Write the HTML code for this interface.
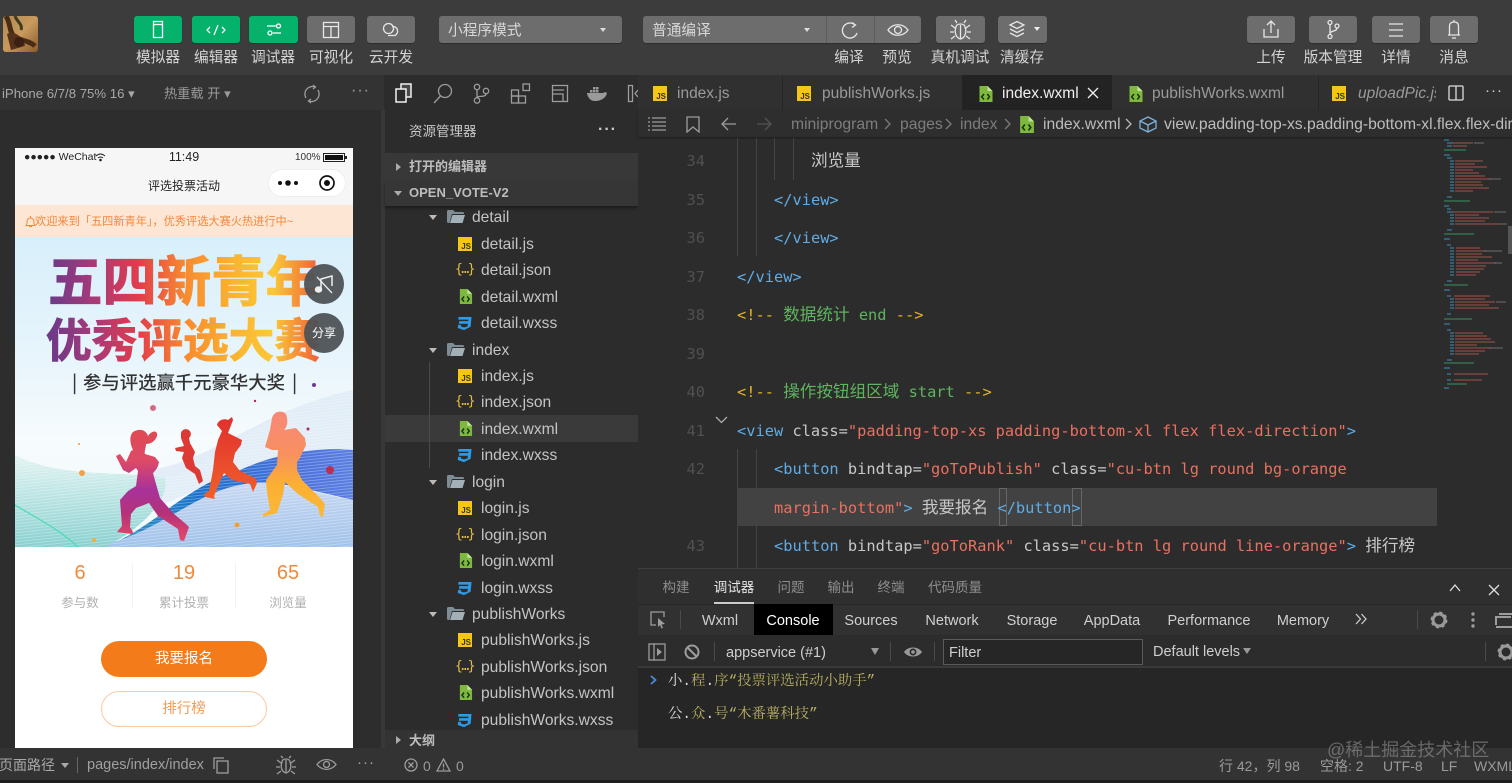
<!DOCTYPE html>
<html lang="zh"><head><meta charset="utf-8"><title>微信开发者工具</title>
<style>
*{box-sizing:border-box}
html,body{margin:0;padding:0;width:1512px;height:783px;overflow:hidden;background:#2d2d2d}
body{position:relative;font-family:"Liberation Sans","Noto Sans CJK SC",sans-serif;color:#ccc;font-size:15px}
.a{position:absolute}
.t{position:absolute;white-space:nowrap;line-height:20px}
.c{transform:translateX(-50%)}
.b{position:absolute;top:16px;height:27px;border-radius:3px;background:#6d6d6d;box-shadow:0 1px 1px rgba(0,0,0,.25)}
.g{background:#05b26c}
.b svg{position:absolute;left:0;top:0;fill:none;stroke:#e6e6e6;stroke-width:1.3}
.g svg{stroke:#fff}
.l{top:47px;margin-top:1px;color:#d4d4d4;font-size:14.7px}
.tab{top:84px;font-size:15.5px;color:#9a9a9a}
.ic{position:absolute;fill:none;stroke:#9d9d9d;stroke-width:1.3}
.code{position:absolute;margin-top:1px;white-space:pre;font-family:"DejaVu Sans Mono","Noto Sans CJK SC",monospace;font-size:15.35px;line-height:20px;color:#c8c8c8}
.cj{font-size:16.6px}
.n{position:absolute;margin-top:1px;left:680px;width:25px;text-align:right;font-family:"DejaVu Sans Mono",monospace;font-size:15.35px;line-height:20px;color:#505050}
.tg{color:#60ace6}.st{color:#ea7060}.cm{color:#5fb45f}.ye{color:#e6b422}
.gd{position:absolute;width:1px;background:#444}
.tr{position:absolute;margin-top:1px;white-space:nowrap;line-height:20px;font-size:15.6px;color:#c4c4c4}
.fi{position:absolute;width:15px;height:15px}
.js{position:absolute;left:458px;width:14px;height:14px;background:#f5c518;color:#333;font:bold 8px/8px "Liberation Sans",sans-serif;text-align:right;padding:6px 1px 0 0}
.js2{position:absolute;top:86px;width:14px;height:15px;background:#f5c518;color:#333;font:bold 8px/8px "Liberation Sans",sans-serif;text-align:right;padding:7px 1px 0 0}
.jn{position:absolute;left:455px;color:#e8c040;font:13px/20px "DejaVu Sans Mono",monospace;letter-spacing:-1.5px;white-space:nowrap}
.dv{top:611px;color:#cfcfcf;font-size:14.5px}
.bc{top:115px;font-size:15.7px;color:#7d7d7d}
.sr{top:756px;font-size:14px;color:#9a9a9a}
</style></head><body>

<svg width="0" height="0" style="position:absolute"><defs>
<symbol id="wx" viewBox="0 0 14 16"><path d="M1 0H9L14 5V16H1Z" fill="#7fb83e"/><path d="M9 0V5H14" fill="#c5e49c"/><path d="M5.500 8L3.200 10.800 5.500 13.500M8.800 8L11 10.800 8.800 13.500" fill="none" stroke="#16300c" stroke-width="1.500"/></symbol>
<symbol id="ss" viewBox="0 0 16 16"><path d="M1.500 1H15.500L14.500 11.500 7.500 15 .8 12.800 1.200 9.500H4.200L4 11 7.500 12.200 11.300 11 11.600 8.300H2L2.400 5.500H12L12.200 3.800H1.400Z" fill="#2f9be8"/></symbol>
<symbol id="fo" viewBox="0 0 18 15"><path d="M0 2.500Q0 1 1.500 1H6L8 3H15.500Q17 3 17 4.500V5H5L2.500 14H1.500Q0 14 0 12.500Z" fill="#7d8d96"/><path d="M5.500 6H18L15.500 14H3Z" fill="#a4b0b8"/></symbol>
</defs></svg>

<!-- top toolbar -->
<div class="a" style="left:0;top:0;width:1512px;height:75px;background:#3c3c3c"></div>
<svg class="a" style="left:3px;top:16px" width="35" height="36" viewBox="0 0 35 36">
<defs><linearGradient id="av" x1="0" y1="0" x2="1" y2="1"><stop offset="0" stop-color="#b08a52"/><stop offset=".5" stop-color="#c89a5e"/><stop offset="1" stop-color="#8b5a2b"/></linearGradient></defs>
<rect width="35" height="36" rx="3" fill="url(#av)"/>
<path d="M3 0C8 8 6 16 11 20C16 25 26 24 32 30" stroke="#4a2c16" stroke-width="5" fill="none"/>
<path d="M4 18C10 14 20 20 22 30L8 34Z" fill="#55301a"/><path d="M12 0C14 6 20 8 18 14" stroke="#3e3a22" stroke-width="3" fill="none"/><circle cx="16" cy="26" r="5" fill="#3a2012"/>
</svg>

<div class="b g" style="left:134px;width:48px"><svg width="48" height="27"><rect x="19.500" y="5.500" width="9" height="16"/><path d="M20 8.500H28"/></svg></div>
<div class="b g" style="left:192px;width:48px"><svg width="48" height="27"><path d="M18 11L15 14 18 17M30 11L33 14 30 17M26 9L22 19"/></svg></div>
<div class="b g" style="left:249px;width:49px"><svg width="49" height="27"><path d="M18 10H27M24 17H32"/><circle cx="29.500" cy="10" r="2"/><circle cx="21" cy="17" r="2"/></svg></div>
<div class="b" style="left:307px;width:48px"><svg width="48" height="27"><rect x="16.500" y="6.500" width="15" height="15"/><path d="M16.500 10.500H31.500M24 10.500V21.500"/></svg></div>
<div class="b" style="left:367px;width:48px"><svg width="48" height="27"><circle cx="21.500" cy="12.500" r="5"/><path d="M25 10.500A4.800 4.800 0 0 1 28 19.500H21"/></svg></div>
<div class="b" style="left:439px;width:183px"></div>
<div class="t" style="left:448px;top:21px;color:#d8d8d8;font-size:14.7px">小程序模式</div>
<div class="a" style="left:600px;top:28px;border:3.500px solid transparent;border-top:4px solid #ddd"></div>
<div class="b" style="left:643px;width:278px"></div>
<div class="a" style="left:826px;top:16px;width:1px;height:27px;background:#5c5c5c"></div>
<div class="a" style="left:874px;top:16px;width:1px;height:27px;background:#5c5c5c"></div>
<div class="t" style="left:652px;top:21px;color:#d8d8d8;font-size:14.7px">普通编译</div>
<div class="a" style="left:804px;top:28px;border:3.500px solid transparent;border-top:4px solid #ddd"></div>
<svg class="a" style="left:827px;top:16px;fill:none;stroke:#e6e6e6;stroke-width:1.300" width="47" height="27"><path d="M28 9A7.500 7.500 0 1 0 30 17M25 6.500L28.500 9 25 11.500"/></svg>
<svg class="a" style="left:875px;top:16px;fill:none;stroke:#e6e6e6;stroke-width:1.300" width="46" height="27"><path d="M13 14C18 7 28 7 33 14C28 21 18 21 13 14Z"/><circle cx="23" cy="14" r="3.500"/></svg>
<div class="b" style="left:936px;width:49px"><svg width="49" height="27"><path d="M20 11C20 7 29 7 29 11C31 16 29 22 24.500 23C20 22 18 16 20 11ZM24.500 9V23M21 7L19 4M28 7L30 4M19 12L15 9M30 12L34 9M18 16H14M31 16H35M19 20L15 23M30 20L34 23"/></svg></div>
<div class="b" style="left:998px;width:49px"><svg width="49" height="27"><path d="M19 9L26 5.500 33 9 26 12.500ZM19 13L26 16.500 33 13M19 17L26 20.500 33 17" transform="translate(-7 0)"/></svg><div class="a" style="left:36px;top:11px;border:3px solid transparent;border-top:4px solid #eee"></div></div>
<div class="b" style="left:1247px;width:48px"><svg width="48" height="27"><path d="M24 5V17M20 9L24 5 28 9M17 13V21H31V13"/></svg></div>
<div class="b" style="left:1309px;width:48px"><svg width="48" height="27"><circle cx="21" cy="6.500" r="2"/><circle cx="21" cy="20.500" r="2"/><circle cx="28" cy="10" r="2"/><path d="M21 8.500V18.500M28 12C28 16 21 14 21 18"/></svg></div>
<div class="b" style="left:1372px;width:48px"><svg width="48" height="27"><path d="M17 8H31M17 14H31M17 20H31"/></svg></div>
<div class="b" style="left:1430px;width:48px"><svg width="48" height="27"><path d="M24 4V6M19.500 19V10C19.500 7.500 21 6 24 6S28.500 7.500 28.500 10V19M18 19H30M22 22H26"/></svg></div>

<div class="t l c" style="left:158px">模拟器</div>
<div class="t l c" style="left:216px">编辑器</div>
<div class="t l c" style="left:273px">调试器</div>
<div class="t l c" style="left:331px">可视化</div>
<div class="t l c" style="left:391px">云开发</div>
<div class="t l c" style="left:849px">编译</div>
<div class="t l c" style="left:897px">预览</div>
<div class="t l c" style="left:960px">真机调试</div>
<div class="t l c" style="left:1022px">清缓存</div>
<div class="t l c" style="left:1271px">上传</div>
<div class="t l c" style="left:1333px">版本管理</div>
<div class="t l c" style="left:1396px">详情</div>
<div class="t l c" style="left:1454px">消息</div>

<!-- simulator -->
<div class="a" style="left:0;top:75px;width:384px;height:705px;background:#2d2d2d"></div>
<div class="a" style="left:0;top:75px;width:384px;height:35px;background:#333"></div>
<div class="a" style="left:381px;top:110px;width:4px;height:638px;background:#383838"></div>
<div class="t" style="left:2px;top:84px;font-size:13.2px;color:#a8a8a8">iPhone 6/7/8 75% 16 ▾</div>
<div class="t" style="left:164px;top:84px;font-size:13.2px;color:#9a9a9a">热重载 开 ▾</div>
<svg class="ic" style="left:302px;top:84px" width="20" height="20"><path d="M4 14A7.500 7.500 0 0 1 13 3M16 6A7.500 7.500 0 0 1 7 17"/><path d="M11 1L13.500 3 11 5M9 19L6.500 17 9 15"/></svg>
<div class="t" style="left:351px;top:81px;font-size:16px;color:#a0a0a0;letter-spacing:1px">···</div>

<!-- phone -->
<div class="a" style="left:15px;top:148px;width:338px;height:600px;background:#fff;overflow:hidden"></div>
<div class="a" style="left:15px;top:148px;width:338px;height:57px;background:#f6f6f6"></div>
<div class="t" style="left:24px;top:147px;font-size:10.5px;color:#222">●●●●● WeChat</div>
<svg class="a" style="left:95px;top:153px" width="11" height="9" fill="none" stroke="#222"><path d="M1 3Q5.500 -1 10 3M3 5Q5.500 3 8 5"/><circle cx="5.500" cy="7" r=".8" fill="#222"/></svg>
<div class="t c" style="left:184px;top:147px;font-size:12.5px;color:#222">11:49</div>
<div class="t" style="left:295px;top:148px;font-size:10px;color:#333">100%</div>
<div class="a" style="left:323px;top:153px;width:22px;height:9px;border:1px solid #222;padding:1px"><div style="width:100%;height:100%;background:#111"></div></div>
<div class="a" style="left:345px;top:156px;width:2px;height:3px;background:#222"></div>
<div class="t c" style="left:184px;top:176px;font-size:12px;color:#222">评选投票活动</div>
<div class="a" style="left:268px;top:169px;width:78px;height:28px;border-radius:14px;background:#fff;border:1px solid #eee"></div>
<svg class="a" style="left:268px;top:169px" width="78" height="28"><circle cx="12" cy="14" r="2" fill="#111"/><circle cx="20" cy="14" r="2.800" fill="#111"/><circle cx="28" cy="14" r="2" fill="#111"/><circle cx="59" cy="14" r="7" fill="none" stroke="#111" stroke-width="1.700"/><circle cx="59" cy="14" r="3" fill="#111"/></svg>
<div class="a" style="left:15px;top:205px;width:338px;height:32px;background:#fde6d3"></div>
<svg class="a" style="left:25px;top:215px" width="11" height="13" fill="none" stroke="#f58a3a"><path d="M5.500 1V2.500M2 9V6.500A3.500 3.500 0 0 1 9 6.500V9L10 10.500H1ZM4 11.500H7"/></svg>
<div class="t" style="left:35px;top:212px;font-size:11.2px;color:#f5873c">欢迎来到「五四新青年」，优秀评选大赛火热进行中~</div>

<!-- poster -->
<svg class="a" style="left:15px;top:237px" width="338" height="310" viewBox="15 237 338 310">
<defs>
<linearGradient id="pb" x1="0" y1="0" x2="0" y2="1"><stop offset="0" stop-color="#d8effb"/><stop offset=".4" stop-color="#e8f5fc"/><stop offset=".65" stop-color="#f6fbfd"/><stop offset="1" stop-color="#f2f9fb"/></linearGradient>
<linearGradient id="ti" gradientUnits="userSpaceOnUse" x1="48" y1="0" x2="322" y2="0"><stop offset="0" stop-color="#6a3a88"/><stop offset=".17" stop-color="#a83a78"/><stop offset=".33" stop-color="#e23c4a"/><stop offset=".5" stop-color="#f88a30"/><stop offset=".68" stop-color="#fbb430"/><stop offset=".82" stop-color="#fbc838"/><stop offset="1" stop-color="#ee5a38"/></linearGradient>
<pattern id="ln" width="3" height="3" patternUnits="userSpaceOnUse" patternTransform="rotate(-6)"><rect width="3" height="1" fill="#fff"/></pattern>
<linearGradient id="te" x1="0" y1="0" x2="0" y2="1"><stop offset="0" stop-color="#e2f4f2"/><stop offset="1" stop-color="#88d0d0"/></linearGradient>
<linearGradient id="lo" x1="0" y1="0" x2="0" y2="1"><stop offset="0" stop-color="#c8d8f2"/><stop offset="1" stop-color="#a0c2ea"/></linearGradient>
<linearGradient id="bl" gradientUnits="userSpaceOnUse" x1="120" y1="0" x2="353" y2="0"><stop offset="0" stop-color="#2a90c0"/><stop offset=".35" stop-color="#1a70cc"/><stop offset=".75" stop-color="#4a70dc"/><stop offset="1" stop-color="#5a7ee0"/></linearGradient>
<linearGradient id="r1" gradientUnits="userSpaceOnUse" x1="0" y1="427" x2="0" y2="542"><stop offset="0" stop-color="#e04a50"/><stop offset=".3" stop-color="#dc4a68"/><stop offset=".55" stop-color="#a8329a"/><stop offset=".75" stop-color="#b43278"/><stop offset="1" stop-color="#e84a68"/></linearGradient>
<linearGradient id="r3" gradientUnits="userSpaceOnUse" x1="0" y1="417" x2="0" y2="499"><stop offset="0" stop-color="#e0302e"/><stop offset="1" stop-color="#f0602a"/></linearGradient>
<linearGradient id="r4" gradientUnits="userSpaceOnUse" x1="0" y1="411" x2="0" y2="517"><stop offset="0" stop-color="#f88878"/><stop offset=".4" stop-color="#f89060"/><stop offset=".7" stop-color="#fbb032"/><stop offset="1" stop-color="#fbb838"/></linearGradient>
</defs>
<rect x="15" y="237" width="338" height="310" fill="url(#pb)"/>
<path d="M150 470C210 462 260 410 353 390V455C300 450 260 462 220 480L150 510Z" fill="#d6e4f4" opacity=".6"/>
<path d="M120 540C160 520 190 495 240 485C270 478 300 490 353 500V547H100Z" fill="url(#lo)"/>
<path d="M15 455C60 478 110 470 165 478C170 500 140 530 105 547H15Z" fill="url(#te)"/>
<path d="M120 540C160 520 190 485 240 470C280 452 320 447 353 450V500C300 488 270 478 240 485C200 492 170 522 120 540Z" fill="url(#bl)"/>
<path d="M15 455C60 478 110 470 165 478C210 470 260 410 353 390V547H15Z" fill="url(#ln)" opacity=".28"/>
<path d="M15 505C40 520 60 530 78 547" stroke="#48dcb0" stroke-width="1.200" fill="none"/>
<text x="48" y="301" textLength="272" lengthAdjust="spacingAndGlyphs" style="font-family:'Noto Sans CJK SC',sans-serif;font-weight:700;font-size:54px" fill="url(#ti)" stroke="url(#ti)" stroke-width="1.200">五四新青年</text>
<text x="46" y="357" textLength="274" lengthAdjust="spacingAndGlyphs" style="font-family:'Noto Sans CJK SC',sans-serif;font-weight:700;font-size:46px" fill="url(#ti)" stroke="url(#ti)" stroke-width="1">优秀评选大赛</text>
<text x="72" y="389" style="font-family:'Noto Sans CJK SC',sans-serif;font-size:18.400px;font-weight:500" fill="#333">|</text>
<text x="83" y="389" textLength="202" style="font-family:'Noto Sans CJK SC',sans-serif;font-size:18.400px;font-weight:500" fill="#333">参与评选赢千元豪华大奖</text>
<text x="292" y="389" style="font-family:'Noto Sans CJK SC',sans-serif;font-size:18.400px;font-weight:500" fill="#333">|</text>
<circle cx="314" cy="385" r="2" fill="#6a3a98"/>
<circle cx="153" cy="408" r="3" fill="#d86a80"/><circle cx="82" cy="473" r="3" fill="#f8a040"/><circle cx="330" cy="470" r="4" fill="#b83050"/><circle cx="237" cy="525" r="2.500" fill="#f0a030"/><circle cx="308" cy="429" r="1.500" fill="#a03060"/><circle cx="255" cy="401" r="1.200" fill="#a03060"/><circle cx="79" cy="444" r="1" fill="#f0a030"/><circle cx="94" cy="540" r="2" fill="#f0b040"/>
<path d="M133 432C140 428 146 430 148 436C152 430 158 430 157 436C155 442 150 444 146 444C146 448 144 452 145 454L155 457L159 462C158 468 155 471 153 473L156 484L160 498L174 514L186 524L189 527L184 541L180 540L178 529L158 516L149 503L136 508L131 514L130 527L133 532L132 534L117 532L122 526L120 500L128 491L136 486L138 471L136 468L129 473L123 470L116 456L120 454L126 462L131 451L133 450C130 444 129 436 133 432Z" fill="url(#r1)"/>
<path d="M181 433A5 5 0 1 1 189 438L190 443L195 452L193 458L195 466L200 470L203 481L199 484L195 474L186 468L182 458L184 452L176 451L175 448L184 446L181 438Z" fill="#dd3a36"/>
<path d="M217 425C218 420 224 418 228 420L232 417L233 420L230 428L228 433L234 436L242 440L241 445L235 453L233 462L240 471L255 478L257 483L253 492L250 484L232 480L224 473L219 484L214 496L215 499L205 497L204 494L209 491L213 470L215 452L218 440L222 431Z" fill="url(#r3)"/>
<path d="M272 418C274 411 282 410 286 414C288 420 288 426 284 430L296 428L305 438L306 445L300 458L297 462L297 470L302 480L320 498L325 504L323 517L320 516L318 507L298 494L285 482L283 495L277 513L263 517L263 514L270 510L267 492L266 480L277 465L278 450L272 450L265 447L270 430Z" fill="url(#r4)"/>
</svg>

<!-- floats -->
<div class="a" style="left:304px;top:264px;width:40px;height:40px;border-radius:50%;background:rgba(78,82,86,.95)"></div>
<svg class="a" style="left:304px;top:264px" width="40" height="40" fill="none" stroke="#eee" stroke-width="1.500"><path d="M17 25V15L28 12V22"/><ellipse cx="14.500" cy="25.500" rx="3" ry="2.500" fill="#eee"/><path d="M13 13L28 29" stroke-width="1.300"/></svg>
<div class="a" style="left:304px;top:313px;width:40px;height:40px;border-radius:50%;background:rgba(78,82,86,.95)"></div>
<div class="t c" style="left:324px;top:323px;font-size:12px;color:#fff">分享</div>

<!-- stats -->
<div class="t c" style="left:80px;top:563px;font-size:20px;color:#ef8a3a">6</div>
<div class="t c" style="left:184px;top:563px;font-size:20px;color:#ef8a3a">19</div>
<div class="t c" style="left:288px;top:563px;font-size:20px;color:#ef8a3a">65</div>
<div class="t c" style="left:80px;top:593px;font-size:12.500px;color:#b0b0b0">参与数</div>
<div class="t c" style="left:184px;top:593px;font-size:12.500px;color:#b0b0b0">累计投票</div>
<div class="t c" style="left:288px;top:593px;font-size:12.500px;color:#b0b0b0">浏览量</div>
<div class="a" style="left:132px;top:564px;width:1px;height:45px;background:#f3f3f3"></div>
<div class="a" style="left:235px;top:562px;width:1px;height:47px;background:#f3f3f3"></div>
<div class="a" style="left:101px;top:641px;width:166px;height:36px;border-radius:18px;background:#f37b1a"></div>
<div class="t c" style="left:184px;top:649px;font-size:14.500px;color:#fff">我要报名</div>
<div class="a" style="left:101px;top:691px;width:166px;height:36px;border-radius:18px;border:1px solid #f9c9a3;background:#fff"></div>
<div class="t c" style="left:184px;top:699px;font-size:14.500px;color:#f39a52">排行榜</div>

<!-- bottom left bar -->
<div class="a" style="left:0;top:748px;width:1512px;height:32px;background:#333"></div>
<div class="a" style="left:0;top:780px;width:1512px;height:3px;background:#1d1d1d"></div>
<div class="t" style="left:-1px;top:755px;font-size:14px;color:#a8a8a8">页面路径</div>
<div class="a" style="left:61px;top:763px;border:4px solid transparent;border-top:5px solid #aaa"></div>
<div class="a" style="left:77px;top:757px;width:1px;height:16px;background:#666"></div>
<div class="t" style="left:87px;top:755px;font-size:14.500px;color:#a0a0a0">pages/index/index</div>
<svg class="ic" style="left:213px;top:757px" width="16" height="17"><path d="M1 12V1H11"/><rect x="4" y="4" width="11" height="12"/></svg>
<svg class="ic" style="left:275px;top:755px" width="22" height="20"><path d="M7 7C7 3 15 3 15 7C17 12 15 17 11 18C7 17 5 12 7 7ZM11 5V18M8 3L6 1M14 3L16 1M6 8L2 5M16 8L20 5M5 12H1M17 12H21M6 16L2 19M16 16L20 19"/></svg>
<svg class="ic" style="left:316px;top:757px" width="21" height="15"><path d="M1 7.500C6 1 15 1 20 7.500C15 14 6 14 1 7.500Z"/><circle cx="10.500" cy="7.500" r="3"/></svg>
<div class="t" style="left:357px;top:753px;font-size:15px;color:#a0a0a0;letter-spacing:1px">···</div>

<!-- explorer -->
<div class="a" style="left:385px;top:75px;width:253px;height:673px;background:#2c2c2c"></div>
<svg class="a" style="left:394px;top:83px;fill:none;stroke:#f2f2f2;stroke-width:1.500" width="21" height="21"><rect x="7" y="1" width="10" height="13" fill="#4a4a4a" stroke="#f2f2f2"/><rect x="2" y="6" width="10" height="13" fill="#2c2c2c"/></svg>
<svg class="ic" style="left:433px;top:83px" width="21" height="21"><circle cx="12" cy="8" r="6.500"/><path d="M7.500 13L1 20"/></svg>
<svg class="ic" style="left:472px;top:83px" width="18" height="21"><circle cx="5" cy="4" r="2.700"/><circle cx="5" cy="17.500" r="2.700"/><circle cx="14" cy="8" r="2.700"/><path d="M5 6.700V14.800M14 10.700C14 15 5 12 5 15"/></svg>
<svg class="ic" style="left:510px;top:83px" width="21" height="21"><rect x="1.500" y="7" width="7" height="6"/><rect x="1.500" y="13" width="7" height="7"/><rect x="8.500" y="13" width="7" height="7"/><rect x="13" y="1" width="6.500" height="6.500"/></svg>
<svg class="ic" style="left:551px;top:84px" width="18" height="19"><rect x="1.500" y="1.500" width="15" height="16"/><path d="M1.500 6H13M1.500 10H12V17.500"/></svg>
<svg class="a" style="left:587px;top:85px" width="20" height="17" fill="#9a9a9a"><path d="M0 8H16C17 7 19 7 20 8C19 13 14 16 8 16C3 16 .5 12 0 8Z"/><rect x="3" y="5" width="2.500" height="2.500"/><rect x="6" y="5" width="2.500" height="2.500"/><rect x="9" y="5" width="2.500" height="2.500"/><rect x="6" y="2" width="2.500" height="2.500"/><rect x="9" y="2" width="2.500" height="2.500"/></svg>
<svg class="ic" style="left:627px;top:84px" width="11" height="19"><rect x="1.500" y="1.500" width="4" height="16"/><path d="M11 6L8 9.500 11 13"/></svg>
<div class="t" style="left:409px;top:122px;font-size:13.500px;color:#c8c8c8">资源管理器</div>
<div class="t" style="left:598px;top:120px;font-size:16px;color:#ccc;letter-spacing:1px;font-weight:bold">···</div>
<div class="a" style="left:385px;top:153px;width:253px;height:27px;background:#383838"></div>
<div class="a" style="left:385px;top:180px;width:253px;height:26px;background:#363636;box-shadow:0 2px 3px rgba(0,0,0,.4)"></div>
<div class="a" style="left:396px;top:163px;border:4px solid transparent;border-left:5px solid #aaa;border-right:0"></div>
<div class="t" style="left:409px;top:157px;font-size:13px;font-weight:bold;color:#bdbdbd">打开的编辑器</div>
<div class="a" style="left:394px;top:191px;border:4px solid transparent;border-top:5px solid #aaa"></div>
<div class="t" style="left:409px;top:183px;font-size:13px;font-weight:bold;color:#bdbdbd">OPEN_VOTE-V2</div>

<div class="a" style="left:385px;top:415px;width:253px;height:27px;background:#3a3a3a"></div>
<div class="a" style="left:429px;top:362px;width:1px;height:106px;background:#4a4a4a"></div>

<!-- tree rows -->
<div class="a" style="left:429px;top:215px;border:4px solid transparent;border-top:5px solid #bbb"></div>
<svg class="fi" style="left:447px;top:209px;width:18px"><use href="#fo"/></svg><div class="tr" style="left:472px;top:207px">detail</div>
<div class="js" style="top:237px">JS</div><div class="tr" style="left:481px;top:234px">detail.js</div>
<div class="jn" style="top:260px">{…}</div><div class="tr" style="left:481px;top:260px">detail.json</div>
<svg class="fi" style="left:458px;top:289px"><use href="#wx"/></svg><div class="tr" style="left:481px;top:287px">detail.wxml</div>
<svg class="fi" style="left:457px;top:316px"><use href="#ss"/></svg><div class="tr" style="left:481px;top:313px">detail.wxss</div>

<div class="a" style="left:429px;top:348px;border:4px solid transparent;border-top:5px solid #bbb"></div>
<svg class="fi" style="left:447px;top:342px;width:18px"><use href="#fo"/></svg><div class="tr" style="left:472px;top:340px">index</div>
<div class="js" style="top:369px">JS</div><div class="tr" style="left:481px;top:366px">index.js</div>
<div class="jn" style="top:392px">{…}</div><div class="tr" style="left:481px;top:392px">index.json</div>
<svg class="fi" style="left:458px;top:421px"><use href="#wx"/></svg><div class="tr" style="left:481px;top:419px">index.wxml</div>
<svg class="fi" style="left:457px;top:448px"><use href="#ss"/></svg><div class="tr" style="left:481px;top:445px">index.wxss</div>

<div class="a" style="left:429px;top:480px;border:4px solid transparent;border-top:5px solid #bbb"></div>
<svg class="fi" style="left:447px;top:474px;width:18px"><use href="#fo"/></svg><div class="tr" style="left:472px;top:472px">login</div>
<div class="js" style="top:501px">JS</div><div class="tr" style="left:481px;top:498px">login.js</div>
<div class="jn" style="top:525px">{…}</div><div class="tr" style="left:481px;top:525px">login.json</div>
<svg class="fi" style="left:458px;top:553px"><use href="#wx"/></svg><div class="tr" style="left:481px;top:551px">login.wxml</div>
<svg class="fi" style="left:457px;top:581px"><use href="#ss"/></svg><div class="tr" style="left:481px;top:578px">login.wxss</div>

<div class="a" style="left:429px;top:612px;border:4px solid transparent;border-top:5px solid #bbb"></div>
<svg class="fi" style="left:447px;top:606px;width:18px"><use href="#fo"/></svg><div class="tr" style="left:472px;top:604px">publishWorks</div>
<div class="js" style="top:633px">JS</div><div class="tr" style="left:481px;top:630px">publishWorks.js</div>
<div class="jn" style="top:657px">{…}</div><div class="tr" style="left:481px;top:657px">publishWorks.json</div>
<svg class="fi" style="left:458px;top:685px"><use href="#wx"/></svg><div class="tr" style="left:481px;top:683px">publishWorks.wxml</div>
<svg class="fi" style="left:457px;top:713px"><use href="#ss"/></svg><div class="tr" style="left:481px;top:710px">publishWorks.wxss</div>

<div class="a" style="left:385px;top:730px;width:253px;height:18px;background:#333"></div>
<div class="a" style="left:396px;top:736px;border:4px solid transparent;border-left:5px solid #aaa;border-right:0"></div>
<div class="t" style="left:409px;top:731px;font-size:13px;font-weight:bold;color:#bdbdbd">大纲</div>

<!-- editor -->
<div class="a" style="left:638px;top:75px;width:874px;height:493px;background:#2c2c2c"></div>
<div class="a" style="left:638px;top:75px;width:874px;height:35px;background:#303030"></div>
<div class="a" style="left:962px;top:75px;width:150px;height:35px;background:#232323"></div>
<div class="a" style="left:782px;top:75px;width:1px;height:35px;background:#262626"></div>
<div class="a" style="left:1318px;top:75px;width:1px;height:35px;background:#262626"></div>
<div class="js2" style="left:653px">JS</div><div class="t tab" style="left:677px">index.js</div>
<div class="js2" style="left:797px">JS</div><div class="t tab" style="left:822px">publishWorks.js</div>
<svg class="fi" style="left:978px;top:86px;height:16px"><use href="#wx"/></svg><div class="t tab" style="left:1002px;color:#efefef">index.wxml</div>
<svg class="a" style="left:1087px;top:87px" width="12" height="12" stroke="#f0f0f0" stroke-width="1.300"><path d="M1 1L11 11M11 1L1 11"/></svg>
<svg class="fi" style="left:1128px;top:86px;height:16px"><use href="#wx"/></svg><div class="t tab" style="left:1152px">publishWorks.wxml</div>
<div class="js2" style="left:1332px">JS</div>
<div class="a" style="left:1358px;top:75px;width:78px;height:35px;overflow:hidden"><div class="t tab" style="left:0;top:9px;font-style:italic">uploadPic.js</div></div>
<svg class="ic" style="left:1448px;top:85px;stroke:#ddd" width="16" height="16"><rect x="1" y="1" width="14" height="14" rx="1"/><path d="M8 1V15"/></svg>
<div class="t" style="left:1485px;top:81px;font-size:15px;color:#ccc;letter-spacing:1px">···</div>

<div class="a" style="left:638px;top:110px;width:874px;height:27px;background:#2e2e2e;box-shadow:0 1px 2px rgba(0,0,0,.35)"></div>
<svg class="ic" style="left:648px;top:116px" width="18" height="16"><path d="M4 2H18M4 6H18M4 10H18M4 14H18M0 2H2M0 6H2M0 10H2M0 14H2"/></svg>
<svg class="ic" style="left:686px;top:116px" width="14" height="17"><path d="M1 1H13V16L7 11 1 16Z"/></svg>
<svg class="ic" style="left:721px;top:117px" width="16" height="14"><path d="M15 7H1M7 1L1 7 7 13"/></svg>
<svg class="ic" style="left:756px;top:117px;stroke:#555" width="16" height="14"><path d="M1 7H15M9 1L15 7 9 13"/></svg>
<div class="t bc" style="left:791px">miniprogram</div>
<svg class="ic" style="left:884px;top:118px;stroke:#7d7d7d" width="8" height="12"><path d="M1 1L6 6 1 11"/></svg>
<div class="t bc" style="left:900px">pages</div>
<svg class="ic" style="left:945px;top:118px;stroke:#7d7d7d" width="8" height="12"><path d="M1 1L6 6 1 11"/></svg>
<div class="t bc" style="left:960px">index</div>
<svg class="ic" style="left:1004px;top:118px;stroke:#7d7d7d" width="8" height="12"><path d="M1 1L6 6 1 11"/></svg>
<svg class="fi" style="left:1019px;top:116px;height:17px"><use href="#wx"/></svg>
<div class="t bc" style="left:1043px;color:#bdbdbd">index.wxml</div>
<svg class="ic" style="left:1125px;top:118px;stroke:#bbb" width="8" height="12"><path d="M1 1L6 6 1 11"/></svg>
<svg class="ic" style="left:1139px;top:116px;stroke:#7fb2dc" width="18" height="17"><path d="M9 1L17 5V12L9 16 1 12V5ZM1 5L9 9 17 5M9 9V16"/></svg>
<div class="t bc" style="left:1164px;color:#bdbdbd;width:348px;overflow:hidden">view.padding-top-xs.padding-bottom-xl.flex.flex-direction</div>

<!-- indent guides -->
<div class="gd" style="left:737px;top:138px;height:118px"></div><div class="gd" style="left:756px;top:138px;height:118px"></div>
<div class="gd" style="left:774px;top:138px;height:42px"></div><div class="gd" style="left:793px;top:138px;height:42px"></div>
<div class="gd" style="left:737px;top:449px;height:119px"></div><div class="gd" style="left:756px;top:449px;height:119px"></div>

<div class="a" style="left:737px;top:488px;width:700px;height:38px;background:#424242"></div>
<div class="a" style="left:999px;top:488px;width:8px;height:38px;border:1px solid #666"></div>
<div class="a" style="left:1072px;top:488px;width:10px;height:38px;border:1px solid #666"></div>

<div class="n" style="top:150px">34</div><div class="code cj" style="left:811px;top:150px">浏览量</div>
<div class="n" style="top:189px">35</div><div class="code tg" style="left:774px;top:189px">&lt;/view&gt;</div>
<div class="n" style="top:227px">36</div><div class="code tg" style="left:774px;top:227px">&lt;/view&gt;</div>
<div class="n" style="top:266px">37</div><div class="code tg" style="left:737px;top:266px">&lt;/view&gt;</div>
<div class="n" style="top:304px">38</div><div class="code cm" style="left:737px;top:304px"><span class="ye">&lt;!--</span> <span class="cj">数据统计</span> end <span class="ye">--&gt;</span></div>
<div class="n" style="top:343px">39</div>
<div class="n" style="top:381px">40</div><div class="code cm" style="left:737px;top:381px"><span class="ye">&lt;!--</span> <span class="cj">操作按钮组区域</span> start <span class="ye">--&gt;</span></div>
<svg class="ic" style="left:715px;top:416px;stroke:#aaa" width="13" height="8"><path d="M1 1L6.500 6.500 12 1"/></svg>
<div class="n" style="top:420px">41</div><div class="code" style="left:737px;top:420px"><span class="tg">&lt;view</span> class=<span class="st">"padding-top-xs padding-bottom-xl flex flex-direction"</span><span class="tg">&gt;</span></div>
<div class="n" style="top:458px">42</div><div class="code" style="left:774px;top:458px"><span class="tg">&lt;button</span> bindtap=<span class="st">"goToPublish"</span> class=<span class="st">"cu-btn lg round bg-orange</span></div>
<div class="code" style="left:774px;top:497px"><span class="st">margin-bottom"</span><span class="tg">&gt;</span> <span class="cj">我要报名</span> <span class="tg">&lt;/button&gt;</span></div>
<div class="n" style="top:535px">43</div><div class="code" style="left:774px;top:535px"><span class="tg">&lt;button</span> bindtap=<span class="st">"goToRank"</span> class=<span class="st">"cu-btn lg round line-orange"</span><span class="tg">&gt;</span> <span class="cj">排行榜</span></div>

<!-- minimap -->
<svg class="a" style="left:1444px;top:138px" width="64" height="256" fill="none" stroke-width="1">
<path stroke="#3f8fb8" d="M0 2h5M3 5h6M3 8h5M0 17h6M3 20h5M6 23h4M6 26h4M6 29h4M6 32h4M6 35h4M6 38h4M6 41h4M6 44h4M6 47h4M6 50h4M6 53h4M3 59h5M0 68h5M3 71h4M3 74h6M6 77h4M6 80h4M6 83h4M6 86h4M3 92h5M0 101h6M3 107h4M6 110h4M6 113h4M6 116h4M6 119h4M6 122h4M6 125h4M6 128h4M6 131h4M6 134h4M6 137h4M3 143h5M0 152h6M3 158h4M6 161h4M6 164h4M6 167h4M6 170h4M3 176h4M0 186h6M3 192h4M6 195h4M6 198h4M6 201h4M6 204h4M6 207h4M6 210h4M6 213h4M6 216h4M3 222h5M0 230h6M3 236h4M3 242h4M0 250h5"/>
<path stroke="#b0584e" stroke-opacity=".9" d="M9 5h20M9 8h14M11 23h28M11 26h20M11 29h32M11 32h18M11 35h24M11 38h30M11 41h36M11 44h26M11 47h28M11 50h34M11 53h18M9 74h40M11 77h24M11 80h34M11 83h30M11 86h44M12 110h24M12 113h30M12 116h26M12 119h36M12 122h22M12 125h40M12 128h30M12 131h28M12 134h24M12 137h20M10 158h36M11 161h30M11 164h40M11 167h34M11 170h44M11 195h28M11 198h32M11 201h36M11 204h40M11 207h22M11 210h36M11 213h30M11 216h24M10 236h34M10 242h28"/>
<path stroke="#3aa86a" stroke-opacity=".85" d="M0 12h22M0 63h26M0 96h30M0 147h24M0 181h28M0 225h30M3 246h20"/>
<path stroke="#8a8a8a" stroke-opacity=".7" d="M30 5h10M45 41h12M50 74h12M40 113h18M50 125h8M55 86h8M52 164h10M45 210h14"/>
</svg>
<div class="a" style="left:1508px;top:226px;width:4px;height:28px;background:#555"></div>

<!-- devtools -->
<div class="a" style="left:638px;top:568px;width:874px;height:36px;background:#2f2f2f;border-top:1px solid #3e3e3e"></div>
<div class="t c" style="left:676px;top:578px;font-size:13.500px;color:#8e8e8e">构建</div>
<div class="t c" style="left:734px;top:578px;font-size:13.500px;color:#e6e6e6">调试器</div>
<div class="t c" style="left:791px;top:578px;font-size:13.500px;color:#8e8e8e">问题</div>
<div class="t c" style="left:841px;top:578px;font-size:13.500px;color:#8e8e8e">输出</div>
<div class="t c" style="left:891px;top:578px;font-size:13.500px;color:#8e8e8e">终端</div>
<div class="t c" style="left:955px;top:578px;font-size:13.500px;color:#8e8e8e">代码质量</div>
<div class="a" style="left:714px;top:602px;width:40px;height:2px;background:#ccc"></div>
<svg class="ic" style="left:1449px;top:584px;stroke:#ddd" width="12" height="8"><path d="M1 7L6 1 11 7"/></svg>
<svg class="a" style="left:1488px;top:584px" width="12" height="12" stroke="#ddd" stroke-width="1.300"><path d="M1 1L11 11M11 1L1 11"/></svg>

<div class="a" style="left:638px;top:604px;width:874px;height:31px;background:#313131;border-top:1px solid #282828"></div>
<div class="a" style="left:754px;top:604px;width:79px;height:31px;background:#000"></div>
<svg class="ic" style="left:650px;top:611px" width="18" height="18"><path d="M6 14H1V1H14V6"/><path d="M8 7L15 13 11.500 13.500 13 17 11.500 17.500 10 14 8 16Z" fill="#9d9d9d" stroke="none"/></svg>
<div class="a" style="left:680px;top:610px;width:1px;height:19px;background:#4a4a4a"></div>
<div class="t c dv" style="left:720px">Wxml</div>
<div class="t c dv" style="left:793px;color:#fff">Console</div>
<div class="t c dv" style="left:871px">Sources</div>
<div class="t c dv" style="left:952px">Network</div>
<div class="t c dv" style="left:1032px">Storage</div>
<div class="t c dv" style="left:1112px">AppData</div>
<div class="t c dv" style="left:1209px">Performance</div>
<div class="t c dv" style="left:1303px">Memory</div>
<svg class="ic" style="left:1355px;top:613px;stroke:#ccc" width="12" height="12"><path d="M1 1L5.500 6 1 11M6.500 1L11 6 6.500 11"/></svg>
<div class="a" style="left:1417px;top:610px;width:1px;height:19px;background:#4a4a4a"></div>
<svg class="a" style="left:1430px;top:611px" width="18" height="18"><circle cx="9" cy="9" r="6" fill="none" stroke="#9a9a9a" stroke-width="3"/><circle cx="9" cy="9" r="7.500" fill="none" stroke="#9a9a9a" stroke-width="2" stroke-dasharray="3 2.900"/></svg>
<svg class="a" style="left:1470px;top:611px" width="6" height="18" fill="#9a9a9a"><circle cx="3" cy="3" r="1.700"/><circle cx="3" cy="9" r="1.700"/><circle cx="3" cy="15" r="1.700"/></svg>
<svg class="ic" style="left:1495px;top:611px" width="17" height="18"><path d="M1 14V6H16M4 3H17M1 16H17" stroke-width="2"/></svg>

<div class="a" style="left:638px;top:635px;width:874px;height:33px;background:#2c2c2c;border-bottom:2px solid #3a3a3a"></div>
<svg class="ic" style="left:648px;top:643px" width="18" height="18"><rect x="1" y="1" width="16" height="16"/><path d="M6 1V17"/><path d="M9 5L14 9 9 13Z" fill="#9d9d9d" stroke="none"/></svg>
<svg class="ic" style="left:684px;top:644px;stroke-width:2" width="16" height="16"><circle cx="8" cy="8" r="6.500"/><path d="M3.500 3.500L12.500 12.500"/></svg>
<div class="a" style="left:714px;top:642px;width:1px;height:19px;background:#4a4a4a"></div>
<div class="t" style="left:726px;top:643px;font-size:14.500px;color:#cfcfcf">appservice (#1)</div>
<div class="a" style="left:871px;top:648px;border:4.500px solid transparent;border-top:7px solid #999"></div>
<div class="a" style="left:890px;top:642px;width:1px;height:19px;background:#4a4a4a"></div>
<svg class="a" style="left:903px;top:645px" width="20" height="14"><path d="M1 7C5 1 15 1 19 7C15 13 5 13 1 7Z" fill="#9a9a9a"/><circle cx="10" cy="7" r="3.500" fill="#2c2c2c"/><circle cx="10" cy="7" r="1.800" fill="#9a9a9a"/></svg>
<div class="a" style="left:934px;top:642px;width:1px;height:19px;background:#4a4a4a"></div>
<div class="a" style="left:943px;top:639px;width:200px;height:26px;border:1px solid #5a5a5a;background:#262626"></div>
<div class="t" style="left:949px;top:643px;font-size:14.500px;color:#d0d0d0">Filter</div>
<div class="t" style="left:1153px;top:642px;font-size:14.500px;color:#cfcfcf">Default levels</div>
<div class="a" style="left:1243px;top:648px;border:4px solid transparent;border-top:6px solid #999"></div>
<div class="a" style="left:1485px;top:642px;width:1px;height:19px;background:#4a4a4a"></div>
<svg class="a" style="left:1497px;top:643px" width="18" height="18"><circle cx="9" cy="9" r="6" fill="none" stroke="#9a9a9a" stroke-width="3"/><circle cx="9" cy="9" r="7.500" fill="none" stroke="#9a9a9a" stroke-width="2" stroke-dasharray="3 2.900"/></svg>

<div class="a" style="left:638px;top:668px;width:874px;height:80px;background:#262626"></div>
<svg class="ic" style="left:650px;top:675px;stroke:#4a90e2;stroke-width:1.700" width="7" height="10"><path d="M1 1L5.500 5 1 9"/></svg>
<div class="t" style="left:668px;top:672px;font-size:14.400px;font-family:'Liberation Mono','Noto Serif CJK SC',serif"><span style="color:#ddd">小</span><span style="color:#ddd">.</span><span style="color:#b8b060">程</span><span style="color:#ddd">.</span><span style="color:#b8b060">序“投票评选活动小助手”</span></div>
<div class="t" style="left:668px;top:705px;font-size:14.400px;font-family:'Liberation Mono','Noto Serif CJK SC',serif"><span style="color:#ddd">公</span><span style="color:#ddd">.</span><span style="color:#b8b060">众</span><span style="color:#ddd">.</span><span style="color:#b8b060">号“木番薯科技”</span></div>

<!-- status right -->
<svg class="ic" style="left:404px;top:758px" width="14" height="14"><circle cx="7" cy="7" r="6"/><path d="M4.500 4.500L9.500 9.500M9.500 4.500L4.500 9.500"/></svg>
<div class="t sr" style="left:423px">0</div>
<svg class="ic" style="left:436px;top:758px" width="15" height="14"><path d="M7.500 1L14 13H1ZM7.500 5.500V9.500M7.500 10.500V12"/></svg>
<div class="t sr" style="left:456px">0</div>
<div class="t sr" style="left:1219px">行 42，列 98</div>
<div class="t sr" style="left:1320px">空格: 2</div>
<div class="t sr" style="left:1383px">UTF-8</div>
<div class="t sr" style="left:1441px">LF</div>
<div class="t sr" style="left:1474px">WXML</div>
<div class="t" style="left:1327px;top:740px;font-size:18px;color:rgba(190,190,190,.42)">@稀土掘金技术社区</div>
</body></html>
